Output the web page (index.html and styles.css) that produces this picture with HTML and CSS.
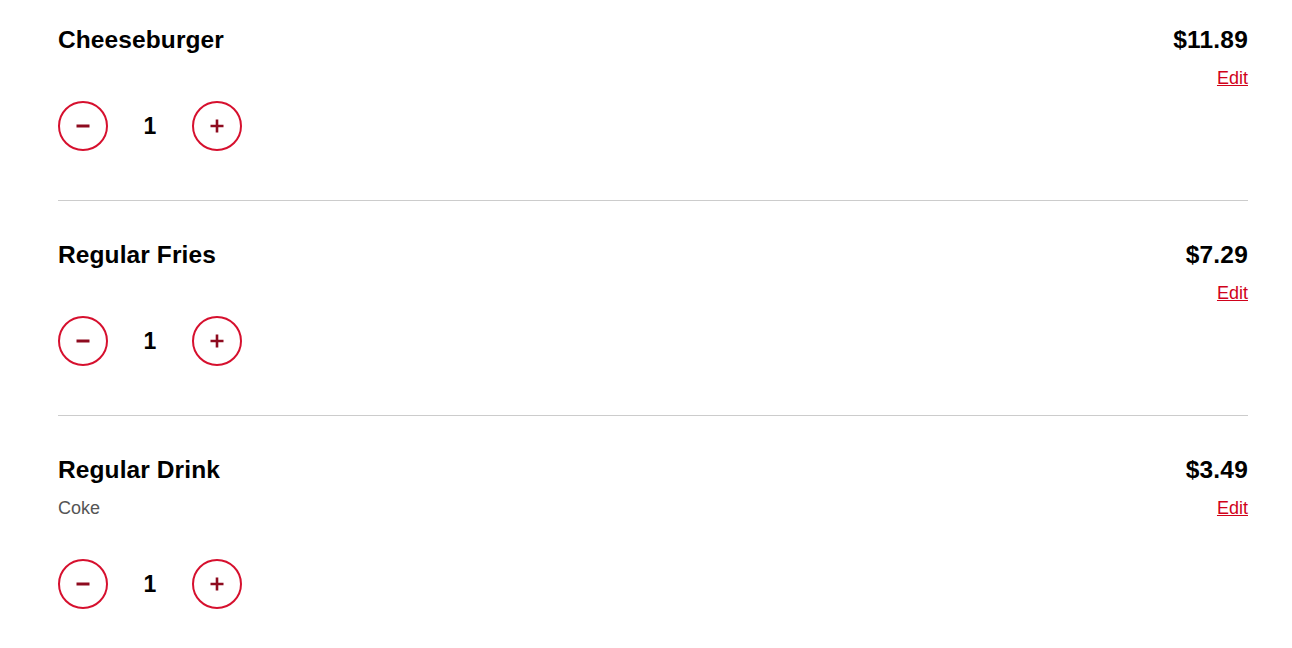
FILE: index.html
```html
<!DOCTYPE html>
<html lang="en">
<head>
    <meta charset="UTF-8">
    <meta name="viewport" content="width=device-width, initial-scale=1.0">
    <title>Your Order</title>
    <link rel="stylesheet" href="styles.css">
</head>
<body>
    <div class="cart">
        <div class="cart-item">
            <div class="item-info">
                <div class="item-name">Cheeseburger</div>
                <div class="qty">
                    <button class="qty-btn" aria-label="Decrease">
                        <svg width="16" height="16" viewBox="0 0 16 16"><path d="M1.5 8h13" stroke="currentColor" stroke-width="3"/></svg>
                    </button>
                    <span class="qty-value">1</span>
                    <button class="qty-btn" aria-label="Increase">
                        <svg width="16" height="16" viewBox="0 0 16 16"><path d="M1.5 8h13M8 1.5v13" stroke="currentColor" stroke-width="2.6"/></svg>
                    </button>
                </div>
            </div>
            <div class="item-side">
                <div class="item-price">$11.89</div>
                <a href="#" class="item-edit">Edit</a>
            </div>
        </div>

        <div class="cart-item">
            <div class="item-info">
                <div class="item-name">Regular Fries</div>
                <div class="qty">
                    <button class="qty-btn" aria-label="Decrease">
                        <svg width="16" height="16" viewBox="0 0 16 16"><path d="M1.5 8h13" stroke="currentColor" stroke-width="3"/></svg>
                    </button>
                    <span class="qty-value">1</span>
                    <button class="qty-btn" aria-label="Increase">
                        <svg width="16" height="16" viewBox="0 0 16 16"><path d="M1.5 8h13M8 1.5v13" stroke="currentColor" stroke-width="2.6"/></svg>
                    </button>
                </div>
            </div>
            <div class="item-side">
                <div class="item-price">$7.29</div>
                <a href="#" class="item-edit">Edit</a>
            </div>
        </div>

        <div class="cart-item">
            <div class="item-info">
                <div class="item-name">Regular Drink</div>
                <div class="item-options">Coke</div>
                <div class="qty">
                    <button class="qty-btn" aria-label="Decrease">
                        <svg width="16" height="16" viewBox="0 0 16 16"><path d="M1.5 8h13" stroke="currentColor" stroke-width="3"/></svg>
                    </button>
                    <span class="qty-value">1</span>
                    <button class="qty-btn" aria-label="Increase">
                        <svg width="16" height="16" viewBox="0 0 16 16"><path d="M1.5 8h13M8 1.5v13" stroke="currentColor" stroke-width="2.6"/></svg>
                    </button>
                </div>
            </div>
            <div class="item-side">
                <div class="item-price">$3.49</div>
                <a href="#" class="item-edit">Edit</a>
            </div>
        </div>
    </div>
</body>
</html>
```

FILE: styles.css
```css
body {
    margin: 0;
    font-family: "Liberation Sans", Arial, sans-serif;
    color: #000;
    background: #fff;
}
.cart {
    padding: 0 44px 0 58px;
}
.cart-item {
    display: flex;
    justify-content: space-between;
    align-items: flex-start;
    padding: 39px 0 49px;
    border-bottom: 1px solid #cccccc;
}
.cart-item:first-child {
    padding-top: 25px;
}
.cart-item:last-child {
    border-bottom: none;
}
.item-name {
    font-size: 24.5px;
    font-weight: bold;
    line-height: 30px;
    letter-spacing: 0.1px;
}
.item-options {
    margin-top: 11px;
    font-size: 18px;
    line-height: 24px;
    color: #555555;
}
.item-side {
    display: flex;
    flex-direction: column;
    align-items: flex-end;
}
.item-price {
    font-size: 24.5px;
    font-weight: bold;
    line-height: 30px;
    letter-spacing: 0.2px;
}
.item-edit {
    margin-top: 12px;
    font-size: 18px;
    line-height: 22px;
    color: #d0021b;
}
.qty {
    display: flex;
    align-items: center;
    margin-top: 46px;
}
.item-options + .qty {
    margin-top: 39px;
}
.qty-btn {
    width: 50px;
    height: 50px;
    padding: 0;
    border: 2.5px solid #d6102e;
    border-radius: 50%;
    background: #fff;
    color: #8e0b1f;
    display: flex;
    align-items: center;
    justify-content: center;
    cursor: pointer;
}
.qty-value {
    width: 84px;
    text-align: center;
    font-size: 23px;
    font-weight: bold;
}
```
